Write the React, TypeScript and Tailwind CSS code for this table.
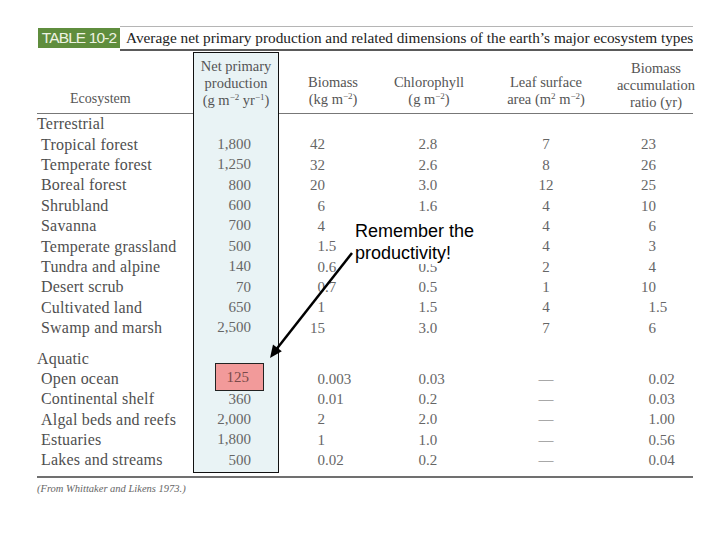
import React from "react";

type Row = { name: string; npp: string; bio: string; chl: string; leaf: string; bar: string };

const terrestrial: Row[] = [
  { name: "Tropical forest", npp: "1,800", bio: "42", chl: "2.8", leaf: "7", bar: "23" },
  { name: "Temperate forest", npp: "1,250", bio: "32", chl: "2.6", leaf: "8", bar: "26" },
  { name: "Boreal forest", npp: "800", bio: "20", chl: "3.0", leaf: "12", bar: "25" },
  { name: "Shrubland", npp: "600", bio: "6", chl: "1.6", leaf: "4", bar: "10" },
  { name: "Savanna", npp: "700", bio: "4", chl: "", leaf: "4", bar: "6" },
  { name: "Temperate grassland", npp: "500", bio: "1.5", chl: "", leaf: "4", bar: "3" },
  { name: "Tundra and alpine", npp: "140", bio: "0.6", chl: "0.5", leaf: "2", bar: "4" },
  { name: "Desert scrub", npp: "70", bio: "0.7", chl: "0.5", leaf: "1", bar: "10" },
  { name: "Cultivated land", npp: "650", bio: "1", chl: "1.5", leaf: "4", bar: "1.5" },
  { name: "Swamp and marsh", npp: "2,500", bio: "15", chl: "3.0", leaf: "7", bar: "6" },
];

const aquatic: Row[] = [
  { name: "Open ocean", npp: "125", bio: "0.003", chl: "0.03", leaf: "—", bar: "0.02" },
  { name: "Continental shelf", npp: "360", bio: "0.01", chl: "0.2", leaf: "—", bar: "0.03" },
  { name: "Algal beds and reefs", npp: "2,000", bio: "2", chl: "2.0", leaf: "—", bar: "1.00" },
  { name: "Estuaries", npp: "1,800", bio: "1", chl: "1.0", leaf: "—", bar: "0.56" },
  { name: "Lakes and streams", npp: "500", bio: "0.02", chl: "0.2", leaf: "—", bar: "0.04" },
];

const serif = { fontFamily: '"Liberation Serif", "DejaVu Serif", serif' };

function Sup({ children }: { children: React.ReactNode }) {
  return <span className="relative -top-[5px] text-[9px] leading-none">{children}</span>;
}

function RowBox({ children, className = "" }: { children?: React.ReactNode; className?: string }) {
  return <div className={"h-[20.4px] shrink-0 flex items-center whitespace-nowrap " + className}>{children}</div>;
}

function Dec({ v, w }: { v: string; w: "bio" | "chl" | "bar" }) {
  if (!v) return null;
  const idx = v.indexOf(".");
  const int = idx >= 0 ? v.slice(0, idx) : v;
  const frac = idx >= 0 ? v.slice(idx) : "";
  const cls = w === "bio" ? "w-[46px]" : w === "chl" ? "w-[47px]" : "w-[43px]";
  return (
    <>
      <span className={"inline-block text-right " + cls}>{int}</span>
      <span>{frac}</span>
    </>
  );
}

function Body({ render }: { render: (r: Row) => React.ReactNode }) {
  return (
    <div className="h-[357px] flex flex-col">
      <RowBox />
      {terrestrial.map((r) => (
        <React.Fragment key={r.name}>{render(r)}</React.Fragment>
      ))}
      <div className="h-[10px] shrink-0" />
      <RowBox />
      {aquatic.map((r) => (
        <React.Fragment key={r.name}>{render(r)}</React.Fragment>
      ))}
    </div>
  );
}

export default function App() {
  return (
    <div className="w-[720px] h-[540px] bg-white relative overflow-hidden text-[#555]" style={serif}>
      {/* Title bar */}
      <div className="pt-[26px] pl-[38px] flex items-start w-[693px]">
        <div
          className="mt-[2px] h-[20px] w-[82px] shrink-0 bg-[#5f8d3d] text-[#eef3e2] text-[15.5px] tracking-[-0.9px] whitespace-nowrap flex items-center justify-center"
          style={{ fontFamily: '"Liberation Sans", Arial, sans-serif' }}
        >
          TABLE 10-2
        </div>
        <div className="flex-1 h-[25px] border-t border-[#b5b5b5] border-b-2 border-b-[#5a5a5a] pl-[6px] flex items-center text-[15.3px] text-[#222] whitespace-nowrap">
          Average net primary production and related dimensions of the earth’s major ecosystem types
        </div>
      </div>

      {/* Table */}
      <div className="ml-[37px] mt-px w-[656px] flex items-start pb-[3px] border-b-2 border-[#707070]">
        {/* Ecosystem column */}
        <div className="w-[156px] flex flex-col">
          <div className="h-[62px] border-b-[1.5px] border-[#777] flex items-end pb-[6px] pl-[33px] text-[14px] leading-[17px]">
            Ecosystem
          </div>
          <div className="h-[357px] flex flex-col text-[16px] tracking-[0.2px] text-[#4f4f4f]">
            <RowBox>Terrestrial</RowBox>
            {terrestrial.map((r) => (
              <RowBox key={r.name} className="pl-[4px]">
                {r.name}
              </RowBox>
            ))}
            <div className="h-[10px] shrink-0" />
            <RowBox>Aquatic</RowBox>
            {aquatic.map((r) => (
              <RowBox key={r.name} className="pl-[4px]">
                {r.name}
              </RowBox>
            ))}
          </div>
        </div>

        {/* NPP column */}
        <div className="w-[86px] border-[1.5px] border-[#111] bg-[#e9f3f5] pb-px">
          <div className="h-[60.5px] flex flex-col items-center justify-end pb-[5px] text-[14.5px] leading-[17px] whitespace-nowrap">
            <div>Net primary</div>
            <div>production</div>
            <div>
              (g m<Sup>−2</Sup> yr<Sup>−1</Sup>)
            </div>
          </div>
          <div className="text-[15px] text-[#666]">
            <Body
              render={(r) =>
                r.npp === "125" ? (
                  <RowBox className="pl-[21px]">
                    <div className="-mt-[3px] h-[28px] w-[49px] bg-[#f29a9a] border border-[#222] flex items-center justify-end pr-[14px] text-[#7a4a4a]">
                      125
                    </div>
                  </RowBox>
                ) : (
                  <RowBox className="justify-end pr-[27px]">{r.npp}</RowBox>
                )
              }
            />
          </div>
        </div>

        {/* Biomass */}
        <div className="w-[100px] flex flex-col">
          <div className="h-[62px] border-b-[1.5px] border-[#777] flex flex-col items-center justify-end pb-[5px] pl-[8px] text-[14.5px] leading-[17px] whitespace-nowrap">
            <div>Biomass</div>
            <div>
              (kg m<Sup>−2</Sup>)
            </div>
          </div>
          <div className="text-[15px] text-[#666]">
            <Body render={(r) => <RowBox><Dec v={r.bio} w="bio" /></RowBox>} />
          </div>
        </div>

        {/* Chlorophyll */}
        <div className="w-[100px] flex flex-col">
          <div className="h-[62px] border-b-[1.5px] border-[#777] flex flex-col items-center justify-end pb-[5px] text-[14.5px] leading-[17px] whitespace-nowrap">
            <div>Chlorophyll</div>
            <div>
              (g m<Sup>−2</Sup>)
            </div>
          </div>
          <div className="text-[15px] text-[#666]">
            <Body render={(r) => <RowBox><Dec v={r.chl} w="chl" /></RowBox>} />
          </div>
        </div>

        {/* Leaf surface area */}
        <div className="w-[134px] flex flex-col">
          <div className="h-[62px] border-b-[1.5px] border-[#777] flex flex-col items-center justify-end pb-[5px] text-[14.5px] leading-[17px] whitespace-nowrap">
            <div>Leaf surface</div>
            <div>
              area (m<Sup>2</Sup> m<Sup>−2</Sup>)
            </div>
          </div>
          <div className="text-[15px] text-[#666]">
            <Body render={(r) => <RowBox className="justify-center">{r.leaf}</RowBox>} />
          </div>
        </div>

        {/* Biomass accumulation ratio */}
        <div className="w-[80px] flex flex-col">
          <div className="h-[62px] border-b-[1.5px] border-[#777] flex flex-col justify-end pb-[2px]">
            <div className="w-[86px] flex flex-col items-center text-[14.5px] leading-[17px] whitespace-nowrap">
              <div>Biomass</div>
              <div>accumulation</div>
              <div>ratio (yr)</div>
            </div>
          </div>
          <div className="text-[15px] text-[#666]">
            <Body render={(r) => <RowBox><Dec v={r.bar} w="bar" /></RowBox>} />
          </div>
        </div>
      </div>

      <div className="ml-[37px] mt-[3px] text-[10.5px] leading-[16px] italic text-[#666] whitespace-nowrap">
        (From Whittaker and Likens 1973.)
      </div>

      {/* Annotation */}
      <div
        className="absolute left-[353px] top-[220px] w-[126px] bg-white pl-[2px] text-[18px] leading-[22px] text-black"
        style={{ fontFamily: '"Liberation Sans", Arial, sans-serif' }}
      >
        <div>Remember the</div>
        <div>productivity!</div>
      </div>
      <svg className="absolute left-0 top-0 pointer-events-none" width="720" height="540">
        <line x1="352" y1="253" x2="277" y2="348.6" stroke="#000" strokeWidth="2.5" />
        <polygon points="270,358 281.8,351.3 273,344.5" fill="#000" />
      </svg>
    </div>
  );
}
